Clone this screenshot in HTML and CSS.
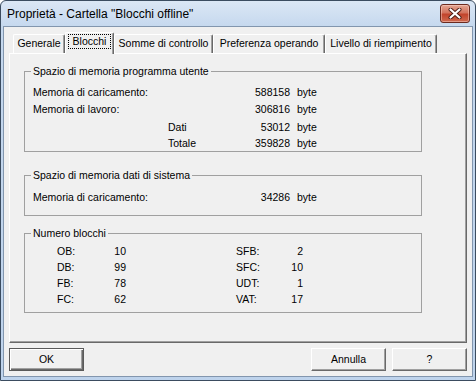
FILE: index.html
```html
<!DOCTYPE html>
<html lang="it">
<head>
<meta charset="utf-8">
<title>Proprietà - Cartella "Blocchi offline"</title>
<link rel="stylesheet" href="styles.css">
</head>
<body>
<div class="window">
  <div class="titlebar">
    <span class="title">Proprietà - Cartella "Blocchi offline"</span>
    <div class="close">
      <svg width="14" height="11" viewBox="0 0 14 11">
        <path d="M2.5 1.5 L11.5 9.5 M11.5 1.5 L2.5 9.5" stroke="#4a1a12" stroke-width="4" stroke-linecap="round"/>
        <path d="M2.5 1.5 L11.5 9.5 M11.5 1.5 L2.5 9.5" stroke="#ffffff" stroke-width="2.2" stroke-linecap="round"/>
      </svg>
    </div>
  </div>
  <div class="client">
    <div class="tabs">
      <div class="tab t1">Generale</div>
      <div class="tab t2 active"><span class="focus">Blocchi</span></div>
      <div class="tab t3">Somme di controllo</div>
      <div class="tab t4">Preferenza operando</div>
      <div class="tab t5">Livello di riempimento</div>
    </div>
    <div class="panel">
      <fieldset class="group g1">
        <legend>Spazio di memoria programma utente</legend>
        <div class="mem">
          <div class="lbl wide">Memoria di caricamento:</div><div class="num">588158</div><div class="unit">byte</div>
          <div class="lbl wide">Memoria di lavoro:</div><div class="num">306816</div><div class="unit">byte</div>
          <div class="lbl"></div><div class="sub">Dati</div><div class="num">53012</div><div class="unit">byte</div>
          <div class="lbl"></div><div class="sub">Totale</div><div class="num">359828</div><div class="unit">byte</div>
        </div>
      </fieldset>
      <fieldset class="group g2">
        <legend>Spazio di memoria dati di sistema</legend>
        <div class="mem one">
          <div class="lbl wide">Memoria di caricamento:</div><div class="num">34286</div><div class="unit">byte</div>
        </div>
      </fieldset>
      <fieldset class="group g3">
        <legend>Numero blocchi</legend>
        <div class="blocks">
          <div class="bl">OB:</div><div class="bv">10</div><div class="bl2">SFB:</div><div class="bv2">2</div>
          <div class="bl">DB:</div><div class="bv">99</div><div class="bl2">SFC:</div><div class="bv2">10</div>
          <div class="bl">FB:</div><div class="bv">78</div><div class="bl2">UDT:</div><div class="bv2">1</div>
          <div class="bl">FC:</div><div class="bv">62</div><div class="bl2">VAT:</div><div class="bv2">17</div>
        </div>
      </fieldset>
    </div>
    <div class="buttons">
      <div class="btn default">OK</div>
      <div class="btn-group">
        <div class="btn">Annulla</div>
        <div class="btn">?</div>
      </div>
    </div>
  </div>
</div>
</body>
</html>
```
FILE: styles.css
```css
html, body {
  margin: 0;
  padding: 0;
}
body {
  width: 476px;
  height: 381px;
  overflow: hidden;
  background: #ffffff;
  font-family: "Liberation Sans", Arial, sans-serif;
  color: #000;
}
.window {
  box-sizing: border-box;
  width: 476px;
  height: 381px;
  border: 1px solid #3b4c60;
  border-radius: 6px 6px 0 0;
  background: linear-gradient(#dbe7f5, #c5d8ee 26px, #bed3ec);
  padding: 0 2px 3px 2px;
  display: flex;
  flex-direction: column;
}
.titlebar {
  height: 25px;
  display: flex;
  align-items: flex-start;
  justify-content: space-between;
  flex: none;
}
.title {
  font-size: 12px;
  line-height: 14px;
  padding: 6px 0 0 4px;
  color: #000;
}
.close {
  box-sizing: border-box;
  width: 30px;
  height: 19px;
  margin: 3px 3px 0 0;
  border: 1px solid #6b2a1e;
  border-radius: 3px;
  background: linear-gradient(#e3a592, #d3735d 45%, #c2442c 55%, #cf6a4f);
  box-shadow: inset 0 0 0 1px rgba(255, 220, 210, 0.45);
  display: flex;
  align-items: center;
  justify-content: center;
}
.client {
  flex: 1;
  box-sizing: border-box;
  border: 1px solid #8296ae;
  background: #f0f0f0;
  padding: 5px 5px 5px 5px;
  display: flex;
  flex-direction: column;
  font-size: 10.5px;
}
.tabs {
  display: flex;
  align-items: flex-end;
  height: 21px;
  padding-left: 4px;
  flex: none;
  position: relative;
  z-index: 1;
}
.tab {
  box-sizing: border-box;
  height: 19px;
  border-top: 1px solid #ffffff;
  border-left: 1px solid #ffffff;
  border-right: 1px solid #696969;
  box-shadow: inset -1px 0 #a0a0a0;
  border-radius: 2px 2px 0 0;
  display: flex;
  align-items: center;
  justify-content: center;
  line-height: 13px;
  padding-bottom: 1px;
  white-space: nowrap;
}
.t1 { width: 52px; }
.t2 { width: 49px; }
.t3 { width: 99px; }
.t4 { width: 112px; }
.t5 { width: 112px; }
.tab.active {
  height: 22px;
  margin-bottom: -1px;
  background: #f0f0f0;
  padding-bottom: 4px;
}
.focus {
  border: 1px dotted #000;
  padding: 0 4px;
  line-height: 13px;
}
.panel {
  flex: 1;
  box-sizing: border-box;
  border-top: 1px solid #ffffff;
  border-left: 1px solid #ffffff;
  border-right: 1px solid #696969;
  border-bottom: 1px solid #696969;
  box-shadow: inset -1px -1px #a0a0a0;
  padding: 0 0 0 14px;
}
.group {
  box-sizing: border-box;
  width: 398px;
  margin: 0;
  border: 1px solid #a0a0a0;
  padding: 0 0 0 6px;
  min-inline-size: 0;
}
.group legend {
  padding: 0 2px;
  line-height: 13px;
  font-size: 10.5px;
}
.g1 { margin-top: 11px; padding-top: 6px; padding-bottom: 0; }
.g2 { margin-top: 17px; padding-top: 7px; padding-bottom: 10px; }
.g3 { margin-top: 11px; padding-top: 3px; padding-bottom: 5px; }
.mem {
  display: grid;
  grid-template-columns: 137px 70px 52px auto;
  grid-template-rows: 17px 18px 16px 16px;
  line-height: 16px;
}
.mem.one {
  grid-template-rows: 16px;
}
.lbl {
  padding-left: 2px;
  white-space: nowrap;
}
.lbl.wide {
  grid-column: 1 / span 2;
}
.num {
  text-align: right;
}
.unit {
  padding-left: 7px;
}
.blocks {
  display: grid;
  grid-template-columns: 26px 43px 26px 110px 40px 27px;
  grid-auto-rows: 16px;
  line-height: 16px;
}
.bl { grid-column: 2; }
.bv { grid-column: 3; text-align: right; }
.bl2 { grid-column: 5; }
.bv2 { grid-column: 6; text-align: right; }
.buttons {
  flex: none;
  margin-top: 5px;
  display: flex;
  justify-content: space-between;
}
.btn-group {
  display: flex;
  gap: 6px;
}
.btn {
  box-sizing: border-box;
  width: 75px;
  height: 23px;
  border-top: 1px solid #ffffff;
  border-left: 1px solid #ffffff;
  border-right: 1px solid #696969;
  border-bottom: 1px solid #696969;
  box-shadow: inset -1px -1px #a0a0a0;
  background: #f0f0f0;
  display: flex;
  align-items: center;
  justify-content: center;
  font-size: 10.5px;
  line-height: 13px;
}
.btn.default {
  border: 1px solid #5a5a5a;
  box-shadow: inset 1px 1px #ffffff, inset -1px -1px #696969, inset -2px -2px #a0a0a0;
}
```
